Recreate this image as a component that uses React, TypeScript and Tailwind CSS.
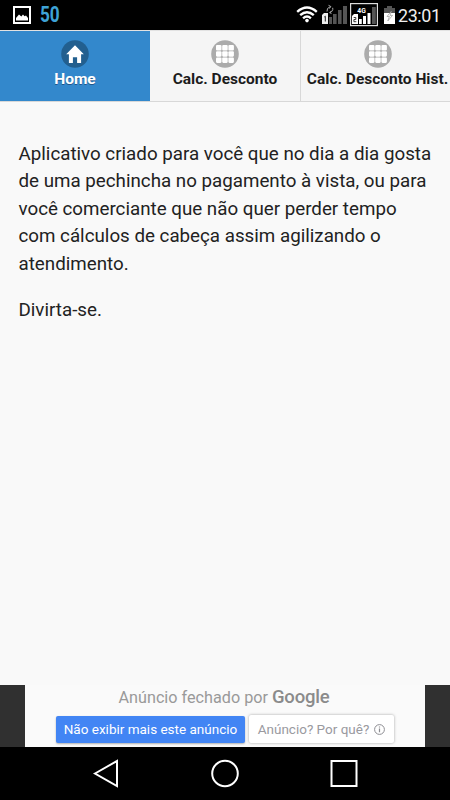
import React from 'react';

const HomeIcon = () => (
  <svg className="w-7 h-7" viewBox="0 0 28 28">
    <circle cx="14" cy="14" r="13.8" fill="#225f8f" />
    <path d="M14 5.2 5.2 14.2H7.9V23H11.9V17.3H16.1V23H20.1V14.2H22.8Z" fill="#fff" />
  </svg>
);

const GridIcon = () => (
  <svg className="w-7 h-7" viewBox="0 0 28 28">
    <circle cx="14" cy="14" r="13.8" fill="#ababab" />
    {[5, 11.2, 17.4].map((y) =>
      [5, 11.2, 17.4].map((x) => (
        <rect key={`${x}-${y}`} x={x} y={y} width="5.5" height="5.5" rx="1.1" fill="#fff" />
      ))
    )}
  </svg>
);

const StatusBar = () => (
  <header className="h-[30px] shrink-0 bg-black flex items-center justify-between pl-[13px] pr-[10px]">
    <div className="flex items-center">
      <svg className="w-[18px] h-[18px]" viewBox="0 0 18 18">
        <rect x="1" y="1" width="16" height="16" fill="none" stroke="#fff" strokeWidth="2" />
        <path d="M3 14.5V12L6 8.5 8.3 10.5 10 8.5 11.5 10.3 13 9.5 15 12V14.5Z" fill="#fff" />
      </svg>
      <span className="ml-[9px] inline-block origin-left scale-x-[0.8] font-bold text-[21.5px] leading-[30px] text-[#3ea2d6]">
        50
      </span>
    </div>

    <svg className="ml-auto w-[102px] h-[30px] shrink-0" viewBox="296 0 102 30">
      {/* Wifi */}
      <g fill="none" stroke="#fff" strokeWidth="2.4">
        <path d="M297.2 11.8Q307 3.2 316.8 11.8" />
        <path d="M300.2 15.2Q307 9.2 313.8 15.2" />
        <path d="M303.1 18.4Q307 14.8 310.9 18.4" />
      </g>
      <circle cx="307" cy="20.6" r="1.8" fill="#fff" />

      {/* SIM 1 */}
      <path d="M322 15 324 13H328V24H322Z" fill="#eee" />
      <path d="M324.3 17 325.3 16.2V21.5" stroke="#222" strokeWidth="1" fill="none" />
      <g fill="#555">
        <rect x="329" y="17" width="3" height="7" />
        <rect x="333" y="14" width="3.6" height="10" />
        <rect x="338" y="10" width="3.6" height="14" />
        <rect x="343" y="6" width="4" height="18" />
      </g>
      <path d="M327 11.5Q326.3 8 330.5 6.5M328.5 5.3 330.8 6.5 329.5 8.5M332.7 7.8Q333.5 11.3 329.8 12.6M331.7 11 329.6 12.6 331.5 13.6" stroke="#aaa" fill="none" />

      {/* SIM 2 */}
      <rect x="350.6" y="3.6" width="26.8" height="22" fill="none" stroke="#ddd" strokeWidth="1.2" />
      <path d="M352 16 354 14H358V24H352Z" fill="#fff" />
      <path d="M353.7 17.5H355.8V19.5H353.9V21.7H356.3" stroke="#222" strokeWidth=".9" fill="none" />
      <g fill="#fff">
        <rect x="359" y="19" width="2.8" height="5" />
        <rect x="363" y="16" width="3" height="8" />
        <rect x="367.5" y="13" width="3" height="11" />
      </g>
      <rect x="372" y="7" width="3.8" height="17" fill="#555" />
      <text x="357.3" y="12.6" fill="#fff" fontSize="8" fontWeight="700" fontFamily="Roboto, sans-serif" textLength="8.5" lengthAdjust="spacingAndGlyphs">4G</text>

      {/* Battery */}
      <path d="M387 6H392V8H395V13H384V8H387Z" fill="#555" />
      <path d="M384 13H395V24H384Z" fill="#fff" />
      <path d="M391.5 11 387 16.5H389.4L387.8 21 392.5 15.4H390Z" fill="#fff" stroke="#888" strokeWidth=".6" />
    </svg>
    <span className="w-[42px] text-[17.9px] leading-[30px] tracking-[-0.4px] text-[#eee] whitespace-nowrap pt-px">23:01</span>
  </header>
);

const TabBar = () => (
  <nav className="h-[72px] shrink-0 flex border-t border-b border-t-[#e2e2e2] border-b-[#d8d8d8] bg-[#f5f5f5] text-[15.5px] leading-[18px] font-bold text-[#1c1c1c] whitespace-nowrap">
    <button className="w-[150px] flex flex-col items-center pt-[8.5px] bg-[#3388cc] text-white [text-shadow:0_1px_0_#225588]">
      <HomeIcon />
      <span className="mt-[2.5px]">Home</span>
    </button>
    <button className="w-[150px] flex flex-col items-center pt-[8.5px]">
      <GridIcon />
      <span className="mt-[2.5px]">Calc. Desconto</span>
    </button>
    <button className="w-[150px] flex flex-col items-center pt-[8.5px] pl-[4px] border-l border-[#d8d8d8]">
      <GridIcon />
      <span className="mt-[2.5px]">Calc. Desconto Hist.</span>
    </button>
  </nav>
);

const AdBanner = () => (
  <aside className="h-[62px] shrink-0 bg-[#303030] flex justify-center">
    <div className="w-[400px] bg-[#fafafa]">
      <div className="h-[29px] flex justify-center items-baseline text-[16.2px] leading-[25px] text-[#999] whitespace-nowrap pr-[2px]">
        <span>Anúncio fechado por</span>
        <span className="ml-[4px] font-medium text-[18.5px] tracking-[-0.2px] text-[#8b8b8b]">Google</span>
      </div>
      <div className="flex pl-[31px] gap-[4px] text-[13.5px] leading-[25px] whitespace-nowrap">
        <button className="w-[189px] h-[27px] mt-[2px] pb-px bg-[#4285f4] text-white rounded-[2px] shadow-[0_1px_2px_rgba(0,0,0,0.3)]">
          Não exibir mais este anúncio
        </button>
        <button className="w-[145px] h-[28px] mt-px flex items-center justify-center bg-white text-[#9a9a9f] rounded-[2px] shadow-[0_0_3px_rgba(0,0,0,0.35)]">
          Anúncio? Por quê?
          <svg className="w-[11px] h-[11px] ml-[5px]" viewBox="0 0 11 11" fill="none" stroke="#8d8d92">
            <circle cx="5.5" cy="5.5" r="4.9" />
            <path d="M5.5 4.6V8.3M5.5 2.5V3.6" strokeWidth="1.2" />
          </svg>
        </button>
      </div>
    </div>
  </aside>
);

const NavigationBar = () => (
  <footer className="h-[53px] shrink-0 bg-black flex">
    <svg className="w-full h-full" viewBox="0 747 450 53" fill="none" stroke="#fff" strokeWidth="2">
      <path d="M95 773.5 117 761V786Z" />
      <circle cx="225" cy="773.5" r="12.8" />
      <rect x="331.5" y="761" width="25" height="25" />
    </svg>
  </footer>
);

const App: React.FC = () => {
  return (
    <div className="w-[450px] h-[800px] flex flex-col overflow-hidden bg-[#f9f9f9] font-[Roboto,sans-serif]">
      <StatusBar />
      <TabBar />
      <main className="flex-1 pt-[39px] px-[18.5px] text-[18.75px] leading-[27.4px] text-[#222] whitespace-nowrap">
        <p>
          Aplicativo criado para você que no dia a dia gosta
          <br />
          de uma pechincha no pagamento à vista, ou para
          <br />
          você comerciante que não quer perder tempo
          <br />
          com cálculos de cabeça assim agilizando o
          <br />
          atendimento.
        </p>
        <p className="mt-[19px]">Divirta-se.</p>
      </main>
      <AdBanner />
      <NavigationBar />
    </div>
  );
};

export default App;
